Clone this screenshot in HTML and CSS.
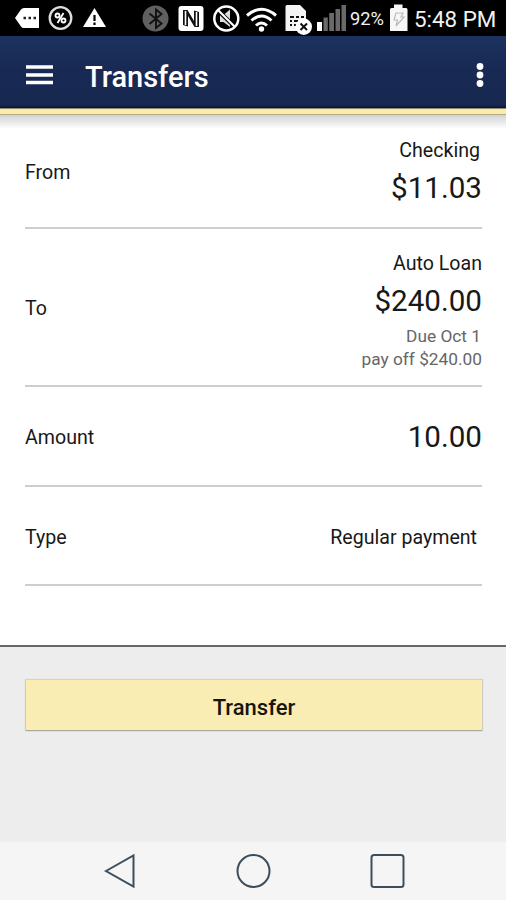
FILE: index.html
```html
<!DOCTYPE html>
<html lang="en">
<head>
<meta charset="utf-8">
<title>Transfers</title>
<link rel="stylesheet" href="styles.css">
</head>
<body>
<div class="screen">
  <div class="status">
    <svg class="notices" width="110" height="36" viewBox="0 0 110 36">
      <path d="M15 18L21 9.500Q22 8 24 8H39V28H24Q22 28 21 26.500Z" fill="#fff"/>
      <path d="M23.500 18H26M28.500 18H31M33.500 18H36" stroke="#222" stroke-width="2.500"/>
      <circle cx="60.500" cy="18" r="10.800" fill="none" stroke="#ddd" stroke-width="2.300"/>
      <g fill="none" stroke="#fff" stroke-width="1.800"><circle cx="57.500" cy="15.500" r="2"/><circle cx="63.500" cy="20.500" r="2"/><path d="M63.500 13L57.500 23"/></g>
      <path d="M94.500 8L106 27H83Z" fill="#fff"/><path d="M94.500 15V21M94.500 22.500V25" stroke="#000" stroke-width="2.200"/>
    </svg>
    <svg class="system" width="206" height="36" viewBox="142 0 206 36">
      <circle cx="155.500" cy="18.500" r="13" fill="#606060"/>
      <path d="M149.500 13.500L161.500 23.500L156 28V9.500L161.500 14L149.500 24" fill="none" stroke="#111" stroke-width="1.900"/>
      <rect x="178.500" y="6" width="25" height="25" rx="3" fill="#fff"/>
      <path d="M183 10H187.500L194 21V10.500L199 12V27H194.500L188 16V26.500L183 25Z" fill="#111"/>
      <path d="M185.500 11V25M196.500 12V26" stroke="#fff" stroke-width="1.600"/>
      <path d="M220 15H223.500L230 9.500V27L223.500 22H220Z" fill="#ddd"/>
      <path d="M217.500 10L235.500 27.500" stroke="#000" stroke-width="4"/>
      <circle cx="226.300" cy="18.500" r="12" fill="none" stroke="#fff" stroke-width="2.500"/>
      <path d="M218 10L235 27" stroke="#fff" stroke-width="2.200"/>
      <g fill="none" stroke="#fff" stroke-width="3"><path d="M247 15.500Q261.500 3 276 15.500M251.500 20.500Q261.500 11.500 271.500 20.500M256 25.500Q261.500 20.500 267 25.500"/></g>
      <circle cx="261.500" cy="29" r="2.700" fill="#fff"/>
      <path d="M287 5H300L306 11V31H285.500V6.500Q285.500 5 287 5Z" fill="#f4f4f4"/>
      <path d="M290 17H294M296 17H299M301 17H304M290 21H292M294 21H298M290 25H292M294 25H298" stroke="#111" stroke-width="2.200"/>
      <circle cx="303.800" cy="26.800" r="8.200" fill="#fff"/>
      <path d="M300.500 23.500L307 30M307 23.500L300.500 30" stroke="#111" stroke-width="2"/>
      <path d="M317 22H322V31H317Z" fill="#fff"/>
      <path d="M323.500 17.500H327.800V31H323.500ZM329.200 13H334V31H329.200ZM335.500 9H340V31H335.500ZM341.500 5H346V31H341.500Z" fill="#696969"/>
    </svg>
    <span class="percent">92%</span>
    <svg class="battery" width="20" height="36" viewBox="0 0 20 36">
      <path d="M6 4.500H14.500V8H18Q19.500 8 19.500 9.500V31H2V9.500Q2 8 3.500 8H6Z" fill="#f7f7f7"/>
      <path d="M8 13H15L13 17H16L8 26L9.500 20H6Z" fill="none" stroke="#bbb" stroke-width="1.200"/>
    </svg>
    <span class="clock">5:48 PM</span>
  </div>
  <header class="bar">
    <svg class="menu" width="27" height="20" viewBox="0 0 27 20"><path d="M0 2H27M0 10H27M0 17.500H27" stroke="#fff" stroke-width="3.400"/></svg>
    <h1>Transfers</h1>
    <svg class="more" width="8" height="26" viewBox="0 0 8 26" fill="#fff"><circle cx="4" cy="4.500" r="3.400"/><circle cx="4" cy="13" r="3.400"/><circle cx="4" cy="21.500" r="3.400"/></svg>
  </header>
  <div class="accent"></div>
  <main class="form">
    <div class="row from">
      <span class="label">From</span>
      <div class="value"><span class="name">Checking</span><span class="money">$11.03</span></div>
    </div>
    <div class="row to">
      <span class="label">To</span>
      <div class="value"><span class="name loan">Auto Loan</span><span class="money">$240.00</span><span class="note due">Due Oct 1</span><span class="note">pay off $240.00</span></div>
    </div>
    <div class="row amount"><span class="label">Amount</span><span class="money">10.00</span></div>
    <div class="row type"><span class="label">Type</span><span class="name kind">Regular payment</span></div>
  </main>
  <footer class="actions"><button class="submit">Transfer</button></footer>
  <nav class="nav">
    <svg width="506" height="58" viewBox="0 0 506 58" fill="none" stroke="#3c4e5b" stroke-width="2">
      <path d="M106 29L133.500 13.500V44.500Z"/><circle cx="253.500" cy="29" r="16"/><rect x="371.500" y="13" width="32" height="32" rx="2.500"/>
    </svg>
  </nav>
</div>
</body>
</html>
```
FILE: styles.css
```css
* { box-sizing: border-box; }
body { margin: 0; background: #ededed; color: #181818; font-family: Roboto, "Liberation Sans", sans-serif; }
.screen { width: 506px; height: 900px; display: flex; flex-direction: column; overflow: hidden; }
svg { display: block; flex: none; }
.status { height: 36px; background: #000; color: #f2f2f2; display: flex; align-items: center; }
.system { margin-left: 32px; }
.percent { width: 40px; padding-left: 2px; font-size: 18.3px; }
.clock { padding-left: 6px; font-size: 22.4px; white-space: nowrap; line-height: 36px; padding-top: 2px; }
.bar { height: 72px; background: linear-gradient(#1d3260, #182954 45%, #172850 96%, #080f38); display: flex; align-items: center; padding: 6px 22px 0 26px; }
.bar h1 { margin: 3px 0 0 32px; color: #fff; font-size: 29px; line-height: 36px; font-weight: 500; }
.more { margin-left: auto; }
.accent { height: 7px; background: #faebaa; border-top: 1px solid #8c8872; border-bottom: 1px solid #b4ad8b; }
.form { height: 532px; padding: 0 24px 0 25px; background: linear-gradient(#d2d2d2, #fff 14px); border-bottom: 2px solid #686868; box-shadow: 0 1px 1px #bbb; }
.row { display: flex; align-items: center; justify-content: space-between; padding-top: 2px; border-bottom: 2px solid #cecece; }
.from { height: 114px; }
.to { height: 158px; }
.amount { height: 100px; }
.type { height: 99px; }
.label, .name { font-size: 19.6px; line-height: 24px; }
.label, .kind { padding-top: 2px; }
.value { display: flex; flex-direction: column; align-items: flex-end; }
.value .name { padding-top: 1px; }
.name { margin-right: 2px; }
.value .loan { margin-right: 0; padding-top: 0; }
.kind { margin-right: 5px; }
.money { font-size: 29.6px; line-height: 36px; }
.from .value { gap: 7px; }
.to .value { padding-top: 7px; }
.to .money { margin: 7px 0 6px; }
.note { color: #666; font-size: 17.3px; line-height: 23px; }
.due { margin-right: 1px; }
.actions { height: 195px; background: #ededed; padding: 33px 24px 0 26px; }
.submit { display: block; width: 456px; height: 50px; padding: 6px 0 0; border: 0; background: #f9edb3; box-shadow: 0 1px 1px #aaa99f, 0 0 1px 1px #d4d3cb; color: #181510; font: 500 22px/26px Roboto, sans-serif; }
.nav { height: 58px; background: #f5f5f5; }
```
